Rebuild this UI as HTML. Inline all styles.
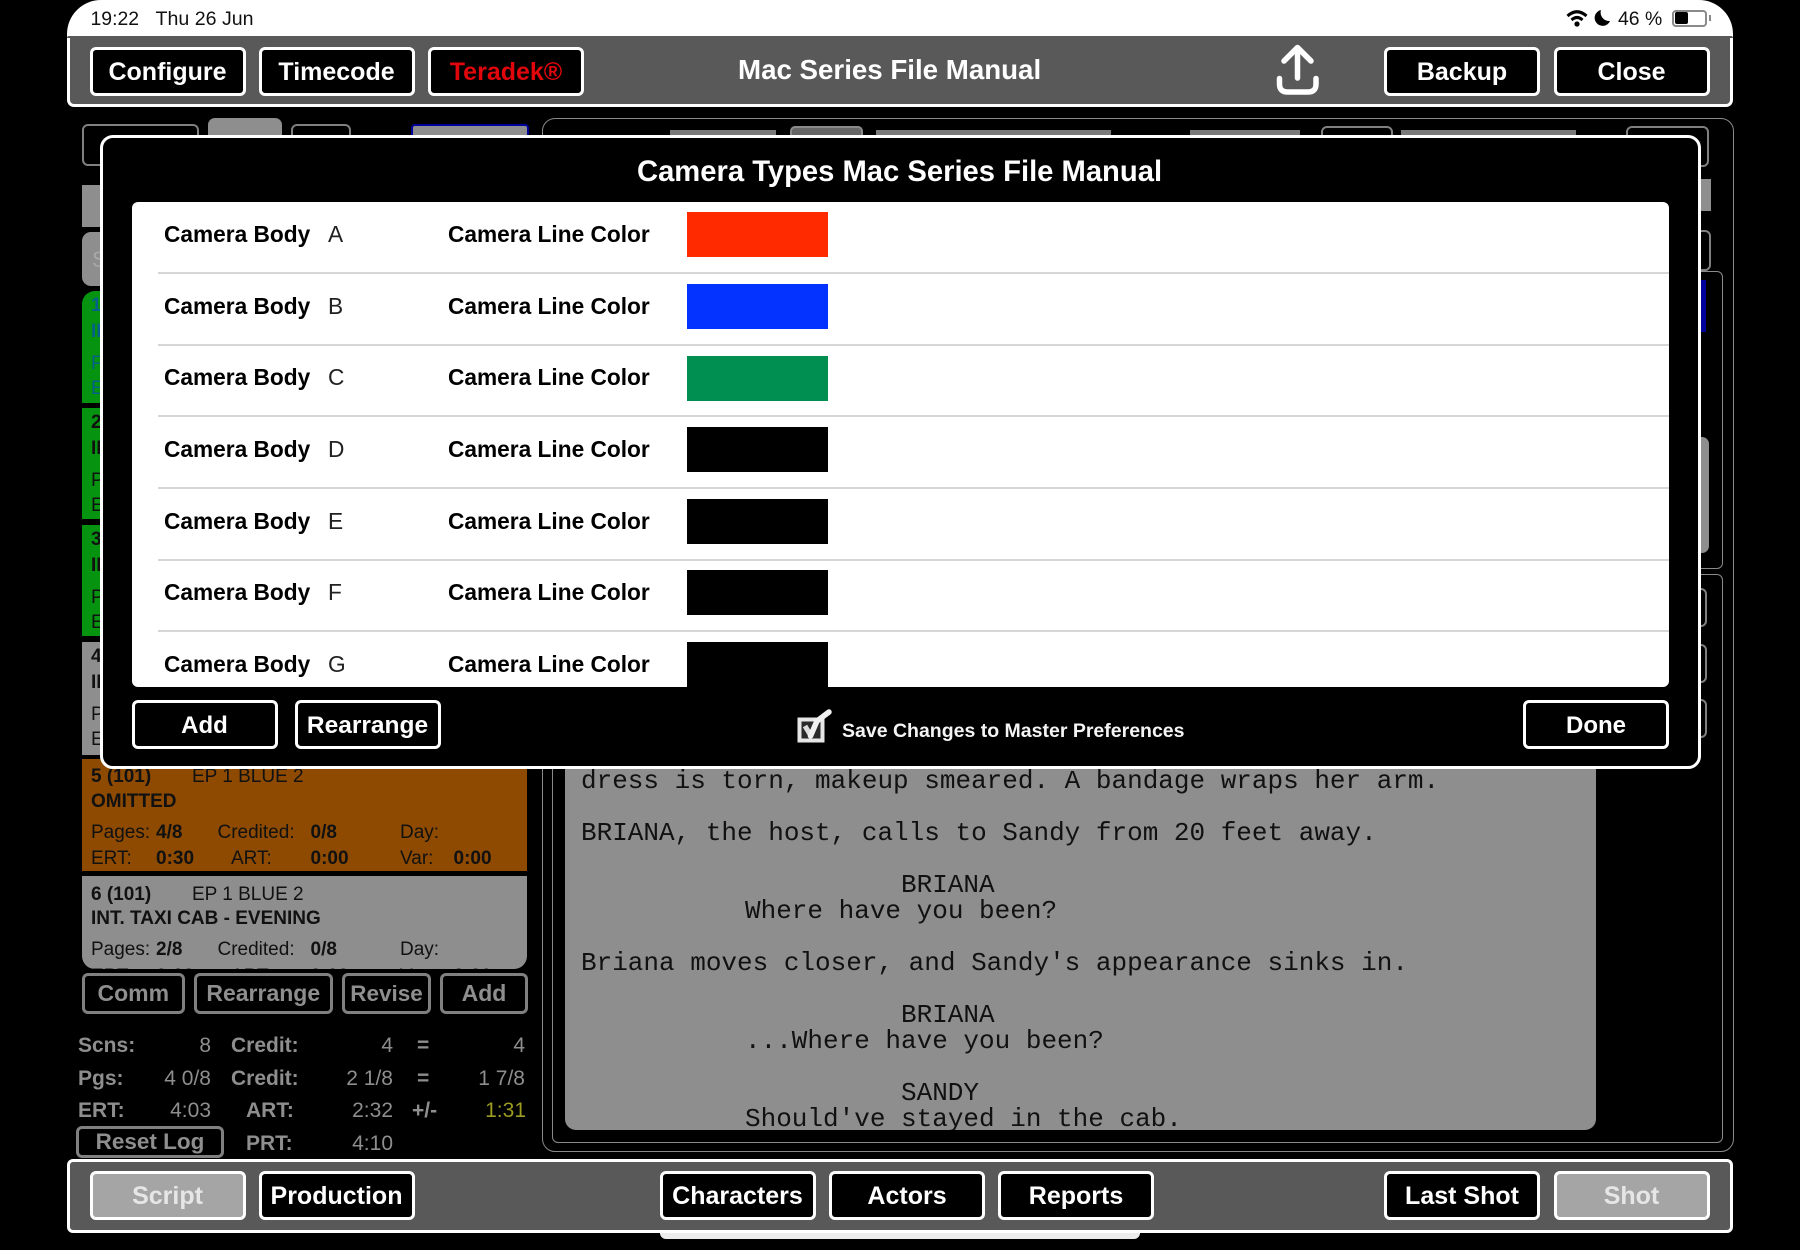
<!DOCTYPE html>
<html><head><meta charset="utf-8"><title>Camera Types</title>
<style>
html,body{margin:0;padding:0;background:#000;}
body{width:1800px;height:1250px;position:relative;overflow:hidden;font-family:"Liberation Sans",sans-serif;}
div,span,svg{position:absolute;box-sizing:border-box;}
.t{white-space:nowrap;height:30px;line-height:30px;}
.r{text-align:right;}
.B{font-weight:bold;}
.b{display:flex;align-items:center;justify-content:center;white-space:nowrap;background:#000;color:#fff;font-weight:bold;font-size:25px;border:3px solid #fff;border-radius:6px;top:47px;height:49px;width:156px;padding-top:2px;}
.g{display:flex;align-items:center;justify-content:center;white-space:nowrap;background:#000;color:#8e8e8e;font-weight:bold;font-size:23px;border:3px solid #808080;border-radius:6px;top:973px;height:41px;}
.sc{left:82px;width:445px;background:#8e8e8e;}
.s{font-size:19px;color:#111;}
.st{font-size:21px;color:#8e8e8e;}
.m{font-family:"Liberation Mono",monospace;font-size:26px;color:#111;white-space:pre;height:30px;line-height:30px;}
.cb{left:164px;font-size:22.7px;font-weight:bold;color:#000;}
.cl{left:328px;font-size:22.7px;color:#222;}
.cc{left:448px;font-size:22.7px;font-weight:bold;color:#000;}
.sw{left:686.5px;width:141.5px;height:45px;background:#000;}
.sep{left:26.5px;right:0;height:2px;background:#d6d6d6;}
</style></head><body>

<!-- status bar -->
<div style="left:67px;top:0;width:1666px;height:40px;background:#fff;border-radius:34px 34px 0 0;"></div>
<div class="t" style="left:90.5px;top:4px;font-size:19.4px;color:#111;">19:22</div>
<div class="t" style="left:155.5px;top:4px;font-size:19.6px;color:#111;">Thu 26 Jun</div>
<svg style="left:1565px;top:8px;" width="24" height="20" viewBox="0 0 24 20"><path d="M2.5 8 Q12 -0.5 21.5 8" fill="none" stroke="#000" stroke-width="3"/><path d="M6.5 12 Q12 7 17.5 12" fill="none" stroke="#000" stroke-width="3"/><circle cx="12" cy="16" r="2.6" fill="#000"/></svg>
<svg style="left:1594px;top:9px;" width="17" height="17" viewBox="0 0 17 17"><path d="M7 1 A8 8 0 1 0 16 12 A8.5 8.5 0 0 1 7 1Z" fill="#000"/></svg>
<div class="t" style="left:1618px;top:4px;font-size:19.4px;color:#111;">46 %</div>
<div style="left:1672px;top:9.5px;width:35px;height:17px;border:2px solid #8a8a8a;border-radius:4px;"></div>
<div style="left:1675px;top:12px;width:13px;height:12px;background:#000;border-radius:2px;"></div>
<div style="left:1709px;top:15px;width:1.5px;height:6px;background:#888;"></div>

<!-- top bar -->
<div style="left:67px;top:36px;width:1666px;height:71px;background:#595959;border:3px solid #fff;border-radius:0 0 7px 7px;border-top:0;"></div>
<div style="left:67px;top:36px;width:1666px;height:2px;background:#595959;border-radius:6px 6px 0 0;"></div>
<div class="b" style="left:89.5px;">Configure</div>
<div class="b" style="left:258.5px;">Timecode</div>
<div class="b" style="left:428px;color:#e0060c;">Teradek®</div>
<div class="t B" style="left:738px;top:55px;font-size:27.7px;color:#fff;">Mac Series File Manual</div>
<svg style="left:1270px;top:40px;" width="56" height="60" viewBox="0 0 56 60"><path d="M27.5 38V8" fill="none" stroke="#fff" stroke-width="5.5" stroke-linecap="round"/><path d="M14 21L27.5 7.5L41 21" fill="none" stroke="#fff" stroke-width="5.5" stroke-linecap="round" stroke-linejoin="round"/><path d="M9.5 38.5V44Q9.5 52 17.5 52H38Q46 52 46 44V38.5" fill="none" stroke="#fff" stroke-width="5.5" stroke-linecap="round"/></svg>
<div class="b" style="left:1384px;">Backup</div>
<div class="b" style="left:1553.5px;">Close</div>

<!-- dim left column top -->
<div style="left:82px;top:124px;width:117px;height:42px;border:2.5px solid #808080;border-radius:6px;"></div>
<div style="left:208px;top:118px;width:74px;height:30px;background:#8e8e8e;border-radius:7px 7px 0 0;"></div>
<div style="left:291px;top:124px;width:60px;height:30px;border:2.5px solid #808080;border-radius:6px;"></div>
<div style="left:411px;top:124px;width:118px;height:30px;background:#8e8e8e;border:2.5px solid #00009a;border-radius:4px;"></div>
<div style="left:82px;top:185px;width:40px;height:42px;background:#8e8e8e;"></div>
<div style="left:82px;top:232px;width:60px;height:54px;background:#8e8e8e;border-radius:9px;"></div>
<div class="t" style="left:92px;top:245px;font-size:22px;color:#a8a8a8;">S</div>

<!-- scene list -->
<div style="left:82px;top:291px;width:445px;height:678px;background:#000;border-radius:13px;overflow:hidden;">
  <div class="sc" style="left:0;top:0;height:112px;background:#069410;"></div>
  <div class="sc" style="left:0;top:117px;height:111px;background:#069410;"></div>
  <div class="sc" style="left:0;top:234px;height:111px;background:#069410;"></div>
  <div class="sc" style="left:0;top:351px;height:113px;"></div>
  <div class="sc" style="left:0;top:468px;height:111.5px;background:#8d4a00;"></div>
  <div class="sc" style="left:0;top:585px;height:100px;"></div>

  <div class="t s B" style="left:9px;top:0px;color:#06608a;">1</div><div class="t s B" style="left:9px;top:26px;color:#06608a;">II</div><div class="t s" style="left:9px;top:58px;color:#06608a;">P</div><div class="t s" style="left:9px;top:83px;color:#06608a;">E</div>
  <div class="t s B" style="left:9px;top:117px;">2</div><div class="t s B" style="left:9px;top:143px;">II</div><div class="t s" style="left:9px;top:175px;">P</div><div class="t s" style="left:9px;top:200px;">E</div>
  <div class="t s B" style="left:9px;top:234px;">3</div><div class="t s B" style="left:9px;top:260px;">II</div><div class="t s" style="left:9px;top:292px;">P</div><div class="t s" style="left:9px;top:317px;">E</div>
  <div class="t s B" style="left:9px;top:351px;">4</div><div class="t s B" style="left:9px;top:377px;">II</div><div class="t s" style="left:9px;top:409px;">P</div><div class="t s" style="left:9px;top:434px;">E</div>

  <div class="t s B" style="left:9px;top:471px;">5 (101)</div><div class="t s" style="left:110px;top:471px;">EP 1 BLUE 2</div>
  <div class="t s B" style="left:9px;top:496px;">OMITTED</div>
  <div class="t s" style="left:9px;top:527px;">Pages:</div><div class="t s B" style="left:74px;top:527px;">4/8</div><div class="t s" style="left:135.5px;top:527px;">Credited:</div><div class="t s B" style="left:228.5px;top:527px;">0/8</div><div class="t s" style="left:318px;top:527px;">Day:</div>
  <div class="t s" style="left:9px;top:553px;">ERT:</div><div class="t s B" style="left:74px;top:553px;">0:30</div><div class="t s" style="left:149px;top:553px;">ART:</div><div class="t s B" style="left:228.5px;top:553px;">0:00</div><div class="t s" style="left:318px;top:553px;">Var:</div><div class="t s B" style="left:371.5px;top:553px;">0:00</div>

  <div class="t s B" style="left:9px;top:589px;">6 (101)</div><div class="t s" style="left:110px;top:589px;">EP 1 BLUE 2</div>
  <div class="t s B" style="left:9px;top:613px;">INT. TAXI CAB - EVENING</div>
  <div class="t s" style="left:9px;top:644px;">Pages:</div><div class="t s B" style="left:74px;top:644px;">2/8</div><div class="t s" style="left:135.5px;top:644px;">Credited:</div><div class="t s B" style="left:228.5px;top:644px;">0/8</div><div class="t s" style="left:318px;top:644px;">Day:</div>
  <div class="t s" style="left:9px;top:671px;">ERT:</div><div class="t s B" style="left:74px;top:671px;">0:30</div><div class="t s" style="left:149px;top:671px;">ART:</div><div class="t s B" style="left:228.5px;top:671px;">0:00</div><div class="t s" style="left:318px;top:671px;">Var:</div><div class="t s B" style="left:371.5px;top:671px;">0:00</div>
</div>

<div class="g" style="left:81.5px;width:103.5px;">Comm</div>
<div class="g" style="left:193.5px;width:139.5px;">Rearrange</div>
<div class="g" style="left:342px;width:89px;font-size:22.5px;">Revise</div>
<div class="g" style="left:440px;width:88px;">Add</div>

<!-- stats -->
<div class="t st B" style="left:78px;top:1031px;">Scns:</div><div class="t st r" style="left:110px;width:101px;top:1031px;">8</div><div class="t st B" style="left:231px;top:1031px;">Credit:</div><div class="t st r" style="left:293px;width:100px;top:1031px;">4</div><div class="t st B" style="left:417px;top:1031px;">=</div><div class="t st r" style="left:425px;width:100px;top:1031px;">4</div>
<div class="t st B" style="left:78px;top:1064px;">Pgs:</div><div class="t st r" style="left:110px;width:101px;top:1064px;">4 0/8</div><div class="t st B" style="left:231px;top:1064px;">Credit:</div><div class="t st r" style="left:293px;width:100px;top:1064px;">2 1/8</div><div class="t st B" style="left:417px;top:1064px;">=</div><div class="t st r" style="left:425px;width:100px;top:1064px;">1 7/8</div>
<div class="t st B" style="left:78px;top:1096px;">ERT:</div><div class="t st r" style="left:110px;width:101px;top:1096px;">4:03</div><div class="t st B" style="left:246px;top:1096px;">ART:</div><div class="t st r" style="left:293px;width:100px;top:1096px;">2:32</div><div class="t st B" style="left:412px;top:1096px;">+/-</div><div class="t st r" style="left:426px;width:100px;top:1096px;color:#9c9c20;">1:31</div>
<div class="g" style="left:76px;top:1126px;width:148px;height:32px;font-size:22.5px;">Reset Log</div>
<div class="t st B" style="left:246px;top:1129px;">PRT:</div><div class="t st r" style="left:293px;width:100px;top:1129px;">4:10</div>

<!-- right side dim -->
<div style="left:542px;top:118px;width:1191.5px;height:1034px;border:1.5px solid #8a8a8a;border-radius:13px;"></div>
<div style="left:670px;top:130px;width:106px;height:30px;background:#7a7a7a;"></div>
<div style="left:790px;top:126px;width:73px;height:30px;background:#666;border:2px solid #8a8a8a;border-radius:5px;"></div>
<div style="left:876px;top:130px;width:235px;height:30px;background:#7a7a7a;"></div>
<div style="left:1190px;top:130px;width:110px;height:30px;background:#7a7a7a;"></div>
<div style="left:1321px;top:126px;width:72px;height:30px;border:2px solid #808080;border-radius:6px;"></div>
<div style="left:1401px;top:130px;width:175px;height:30px;background:#7a7a7a;"></div>
<div style="left:1626px;top:126px;width:83px;height:41px;border:2px solid #808080;border-radius:6px;"></div>
<div style="left:1640px;top:179px;width:71px;height:32px;background:#8e8e8e;"></div>
<div style="left:1640px;top:230px;width:71px;height:41px;border:2px solid #808080;border-radius:6px;"></div>
<div style="left:552px;top:271px;width:1170.5px;height:298px;border:1.5px solid #8a8a8a;border-radius:6px;"></div>
<div style="left:1640px;top:280px;width:66px;height:52px;background:#00009a;"></div>
<div style="left:1640px;top:437px;width:69px;height:116px;background:#8e8e8e;border-radius:7px;"></div>
<div style="left:552px;top:574px;width:1170.5px;height:569px;border:1.5px solid #8a8a8a;border-radius:6px;"></div>
<div style="left:1640px;top:588px;width:67px;height:39px;border:2px solid #808080;border-radius:6px;"></div>
<div style="left:1640px;top:644px;width:67px;height:39px;border:2px solid #808080;border-radius:6px;"></div>
<div style="left:1640px;top:699px;width:67px;height:39px;border:2px solid #808080;border-radius:6px;"></div>

<!-- script panel -->
<div style="left:565px;top:700px;width:1031px;height:430px;background:#8e8e8e;border-radius:0 0 11px 11px;overflow:hidden;">
  <div class="m" style="left:16px;top:66px;">dress is torn, makeup smeared. A bandage wraps her arm.</div>
  <div class="m" style="left:16px;top:118px;">BRIANA, the host, calls to Sandy from 20 feet away.</div>
  <div class="m" style="left:336px;top:170px;">BRIANA</div>
  <div class="m" style="left:180px;top:196px;">Where have you been?</div>
  <div class="m" style="left:16px;top:248px;">Briana moves closer, and Sandy's appearance sinks in.</div>
  <div class="m" style="left:336px;top:300px;">BRIANA</div>
  <div class="m" style="left:180px;top:326px;">...Where have you been?</div>
  <div class="m" style="left:336px;top:378px;">SANDY</div>
  <div class="m" style="left:180px;top:404px;">Should've stayed in the cab.</div>
</div>

<!-- modal -->
<div style="left:100px;top:135px;width:1601px;height:634px;background:#000;border:3px solid #fff;border-radius:13px;"></div>
<div class="t B" style="left:637px;top:157px;font-size:29.2px;color:#fff;">Camera Types Mac Series File Manual</div>
<div style="left:131.5px;top:202px;width:1537.5px;height:485px;background:#fff;border-radius:6px;overflow:hidden;">
  <div class="sep" style="top:70px;"></div><div class="sep" style="top:142px;"></div><div class="sep" style="top:213px;"></div><div class="sep" style="top:285px;"></div><div class="sep" style="top:357px;"></div><div class="sep" style="top:428px;"></div>
  <div class="t cb" style="left:32.5px;top:17px;">Camera Body</div><div class="t cl" style="left:196.5px;top:17px;">A</div><div class="t cc" style="left:316.5px;top:17px;">Camera Line Color</div><div class="sw" style="left:555px;top:10px;background:#ff2a00;"></div>
  <div class="t cb" style="left:32.5px;top:89px;">Camera Body</div><div class="t cl" style="left:196.5px;top:89px;">B</div><div class="t cc" style="left:316.5px;top:89px;">Camera Line Color</div><div class="sw" style="left:555px;top:82px;background:#0433ff;"></div>
  <div class="t cb" style="left:32.5px;top:160px;">Camera Body</div><div class="t cl" style="left:196.5px;top:160px;">C</div><div class="t cc" style="left:316.5px;top:160px;">Camera Line Color</div><div class="sw" style="left:555px;top:154px;background:#008f51;"></div>
  <div class="t cb" style="left:32.5px;top:232px;">Camera Body</div><div class="t cl" style="left:196.5px;top:232px;">D</div><div class="t cc" style="left:316.5px;top:232px;">Camera Line Color</div><div class="sw" style="left:555px;top:225px;"></div>
  <div class="t cb" style="left:32.5px;top:304px;">Camera Body</div><div class="t cl" style="left:196.5px;top:304px;">E</div><div class="t cc" style="left:316.5px;top:304px;">Camera Line Color</div><div class="sw" style="left:555px;top:297px;"></div>
  <div class="t cb" style="left:32.5px;top:375px;">Camera Body</div><div class="t cl" style="left:196.5px;top:375px;">F</div><div class="t cc" style="left:316.5px;top:375px;">Camera Line Color</div><div class="sw" style="left:555px;top:368px;"></div>
  <div class="t cb" style="left:32.5px;top:447px;">Camera Body</div><div class="t cl" style="left:196.5px;top:447px;">G</div><div class="t cc" style="left:316.5px;top:447px;">Camera Line Color</div><div class="sw" style="left:555px;top:440px;"></div>
</div>
<div class="b" style="left:131.5px;top:700px;width:146px;font-size:24px;">Add</div>
<div class="b" style="left:294.5px;top:700px;width:146px;font-size:24.5px;">Rearrange</div>
<div class="b" style="left:1523px;top:700px;width:146px;font-size:24px;">Done</div>
<svg style="left:796px;top:706px;" width="38" height="38" viewBox="0 0 38 38"><rect x="3.5" y="13.5" width="23" height="21" fill="#2a2a2a" stroke="#e6e6e6" stroke-width="4"/><path d="M9 20L15 30" fill="none" stroke="#ddd" stroke-width="5"/><path d="M14.5 30L21 15L33 6" fill="none" stroke="#f0f0f0" stroke-width="5.5" stroke-linecap="round"/></svg>
<div class="t B" style="left:842px;top:716px;font-size:19.5px;color:#f4f4f4;">Save Changes to Master Preferences</div>

<!-- bottom bar -->
<div style="left:660px;top:1225px;width:480px;height:14px;background:#ececec;border-radius:0 0 6px 6px;"></div>
<div style="left:67px;top:1159px;width:1666px;height:74px;background:#595959;border:3px solid #fff;border-radius:6px;"></div>
<div class="b" style="left:89.5px;top:1171px;background:#a5a5a5;color:#e6e6e6;">Script</div>
<div class="b" style="left:258.5px;top:1171px;">Production</div>
<div class="b" style="left:659.5px;top:1171px;">Characters</div>
<div class="b" style="left:829px;top:1171px;">Actors</div>
<div class="b" style="left:998px;top:1171px;">Reports</div>
<div class="b" style="left:1384px;top:1171px;">Last Shot</div>
<div class="b" style="left:1553.5px;top:1171px;background:#a5a5a5;color:#e6e6e6;">Shot</div>
</body></html>
